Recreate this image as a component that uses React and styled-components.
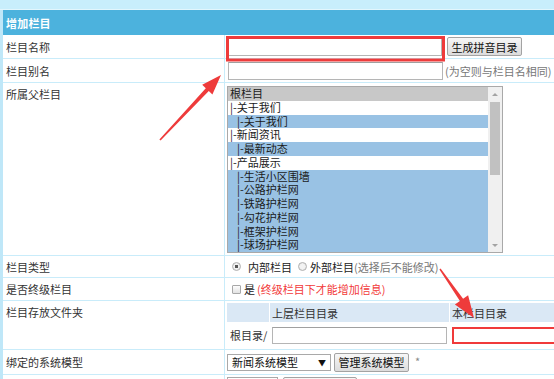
import React from 'react';
import styled, { createGlobalStyle } from 'styled-components';

const Global = createGlobalStyle`
  html, body { margin: 0; padding: 0; background: #fff; overflow: hidden; }
  body {
    font-family: "Noto Sans CJK SC", "Noto Sans", sans-serif;
    font-size: 11px;
    color: #333;
  }
  * { box-sizing: border-box; }
`;

const Page = styled.div`
  position: relative;
  width: 554px;
  height: 379px;
  overflow: hidden;
`;

const TopBand = styled.div`
  height: 10px;
  background: #c8eefc;
  border-bottom: 1px solid #e2f6fd;
`;

const Form = styled.div`
  border-left: 3px solid #bfe7f8;
`;

const Header = styled.div`
  height: 25px;
  background: #4cb2dd;
  color: #fff;
  font-weight: bold;
  padding-left: 3px;
  display: flex;
  align-items: center;
  letter-spacing: 0.2px;
`;

const Row = styled.div`
  display: grid;
  grid-template-columns: 222px 1fr;
  height: ${(p) => p.h}px;
  border-bottom: 1px solid #c9ecfa;
`;

const Label = styled.div`
  border-right: 1px solid #c9ecfa;
  padding-left: 3px;
  display: flex;
  align-items: ${(p) => (p.top ? 'flex-start' : 'center')};
  padding-top: ${(p) => (p.top ? '3px' : '0')};
  line-height: 16px;
  color: #333;
  white-space: nowrap;
`;

const Field = styled.div`
  display: flex;
  align-items: ${(p) => (p.top ? 'flex-start' : 'center')};
  padding-left: ${(p) => p.pl ?? 3}px;
  padding-top: ${(p) => p.pt ?? 0}px;
  white-space: nowrap;
  min-width: 0;
`;

const TextInput = styled.div`
  width: ${(p) => p.w}px;
  height: ${(p) => p.hh ?? 18}px;
  margin-left: ${(p) => p.ml ?? 0}px;
  flex-shrink: 0;
  background: #fff;
  border: ${(p) => (p.red ? '2px solid #f03a3a' : '1px solid #b5b5b5')};
  border-top-color: ${(p) => (p.red ? '#f03a3a' : '#a0a0a0')};
`;

const Button = styled.div`
  width: ${(p) => p.w}px;
  height: 19px;
  margin-left: ${(p) => p.ml ?? 0}px;
  flex-shrink: 0;
  display: flex;
  align-items: center;
  justify-content: center;
  border: 1px solid #a3a3a3;
  border-radius: 2px;
  background: linear-gradient(#f7f7f7, #dcdcdc);
  color: #111;
  font-size: 11px;
`;

const Hint = styled.span`
  color: ${(p) => (p.red ? '#f23a3a' : '#777')};
  margin-left: ${(p) => p.ml ?? 0}px;
`;

const Text = styled.span`
  color: #222;
  margin-left: ${(p) => p.ml ?? 0}px;
`;

const ListBox = styled.div`
  width: 276px;
  height: 167px;
  border: 1px solid #a9a9a9;
  display: flex;
  background: #fff;
`;

const Options = styled.div`
  flex: 1;
  min-width: 0;
`;

const Option = styled.div`
  height: 13.75px;
  line-height: 13.75px;
  padding-left: ${(p) => 2 + p.level * 7}px;
  color: #1a1a1a;
  background: ${(p) =>
    p.kind === 'grey' ? '#c8c8c8' : p.kind === 'blue' ? '#99c2e4' : '#fff'};
  white-space: nowrap;
`;

const Scrollbar = styled.div`
  width: 14px;
  background: #f0f0f0;
  display: flex;
  flex-direction: column;
  align-items: center;
`;

const ScrollArrow = styled.div`
  height: 14px;
  width: 100%;
  display: flex;
  align-items: center;
  justify-content: center;
  &::before {
    content: '';
    border-left: 3px solid transparent;
    border-right: 3px solid transparent;
    ${(p) => (p.down ? 'border-top: 3px solid #a3a3a3;' : 'border-bottom: 3px solid #a3a3a3;')}
  }
`;

const Thumb = styled.div`
  width: 10px;
  height: 73px;
  margin-top: 1px;
  background: #c1c1c1;
`;

const Spacer = styled.div`
  flex: 1;
`;

const Radio = styled.span`
  width: 9px;
  height: 9px;
  border-radius: 50%;
  border: 1px solid #b0b0b0;
  background: radial-gradient(circle, ${(p) => (p.checked ? '#555 0 1.8px, ' : '')}#f3f3f3 2px, #dedede 100%);
  margin-left: ${(p) => p.ml ?? 0}px;
  flex-shrink: 0;
`;

const Check = styled.span`
  width: 9px;
  height: 9px;
  border: 1px solid #a8a8a8;
  border-radius: 1px;
  background: linear-gradient(#fdfdfd, #e2e2e2);
  margin-left: ${(p) => p.ml ?? 0}px;
  flex-shrink: 0;
`;

const DirTable = styled.div`
  display: flex;
  flex-direction: column;
  width: 100%;
`;

const DirRow = styled.div`
  display: grid;
  grid-template-columns: 42px 179px 1fr;
  column-gap: 1px;
  height: ${(p) => p.h}px;
  margin-top: ${(p) => p.mt ?? 0}px;
`;

const DirHead = styled.div`
  background: #dae8f5;
  padding-left: 2px;
  display: flex;
  align-items: center;
  color: #333;
`;

const DirCell = styled.div`
  display: flex;
  align-items: center;
  padding-left: ${(p) => p.pl ?? 0}px;
  color: #333;
`;

const Select = styled.div`
  width: ${(p) => p.w}px;
  height: 17px;
  flex-shrink: 0;
  border: 1px solid #a9a9a9;
  background: #fff;
  display: flex;
  align-items: center;
  justify-content: space-between;
  padding: 0 4px 0 4px;
  color: #111;
`;

const Caret = styled.span`
  font-size: 8px;
  color: #111;
`;

const Star = styled.span`
  color: #888;
  margin-left: 6px;
  align-self: flex-start;
  margin-top: 3px;
`;

const Overlay = styled.svg`
  position: absolute;
  left: 0;
  top: 0;
  pointer-events: none;
`;

const options = [
  { t: '根栏目', level: 0, kind: 'grey' },
  { t: '|-关于我们', level: 0, kind: 'white' },
  { t: '|-关于我们', level: 1, kind: 'blue' },
  { t: '|-新闻资讯', level: 0, kind: 'white' },
  { t: '|-最新动态', level: 1, kind: 'blue' },
  { t: '|-产品展示', level: 0, kind: 'white' },
  { t: '|-生活小区围墙', level: 1, kind: 'blue' },
  { t: '|-公路护栏网', level: 1, kind: 'blue' },
  { t: '|-铁路护栏网', level: 1, kind: 'blue' },
  { t: '|-勾花护栏网', level: 1, kind: 'blue' },
  { t: '|-框架护栏网', level: 1, kind: 'blue' },
  { t: '|-球场护栏网', level: 1, kind: 'blue' },
];

const RED = '#ee3b3b';

export default function App() {
  return (
    <Page>
      <Global />
      <TopBand />
      <Form>
        <Header>增加栏目</Header>

        <Row h={24}>
          <Label>栏目名称</Label>
          <Field>
            <TextInput w={214} hh={18} ml={0} />
            <Button w={75} ml={5}>生成拼音目录</Button>
          </Field>
        </Row>

        <Row h={24}>
          <Label>栏目别名</Label>
          <Field>
            <TextInput w={215} hh={18} />
            <Hint ml={2}>(为空则与栏目名相同)</Hint>
          </Field>
        </Row>

        <Row h={173}>
          <Label top>所属父栏目</Label>
          <Field top pl={2} pt={3}>
            <ListBox>
              <Options>
                {options.map((o, i) => (
                  <Option key={i} level={o.level} kind={o.kind}>{o.t}</Option>
                ))}
              </Options>
              <Scrollbar>
                <ScrollArrow />
                <Thumb />
                <Spacer />
                <ScrollArrow down />
              </Scrollbar>
            </ListBox>
          </Field>
        </Row>

        <Row h={22}>
          <Label>栏目类型</Label>
          <Field pl={7}>
            <Radio checked />
            <Text ml={7}>内部栏目</Text>
            <Radio ml={6} />
            <Text ml={3}>外部栏目</Text>
            <Hint>(选择后不能修改)</Hint>
          </Field>
        </Row>

        <Row h={23}>
          <Label>是否终级栏目</Label>
          <Field pl={7}>
            <Check />
            <Text ml={3}>是</Text>
            <Hint red ml={2}>(终级栏目下才能增加信息)</Hint>
          </Field>
        </Row>

        <Row h={49}>
          <Label top>栏目存放文件夹</Label>
          <Field top pl={2} pt={2}>
            <DirTable>
              <DirRow h={19}>
                <DirHead />
                <DirHead>上层栏目目录</DirHead>
                <DirHead>本栏目目录</DirHead>
              </DirRow>
              <DirRow h={18} mt={4}>
                <DirCell pl={3}>根目录/</DirCell>
                <DirCell pl={2}>
                  <TextInput w={175} hh={17} />
                </DirCell>
                <DirCell pl={2}>
                  <TextInput w={120} hh={17} red />
                </DirCell>
              </DirRow>
            </DirTable>
          </Field>
        </Row>

        <Row h={25}>
          <Label>绑定的系统模型</Label>
          <Field pl={2}>
            <Select w={104}>
              <span>新闻系统模型</span>
              <Caret>▼</Caret>
            </Select>
            <Button w={75} ml={3}>管理系统模型</Button>
            <Star>*</Star>
          </Field>
        </Row>

        <Row h={30}>
          <Label />
          <Field top pl={2} pt={2}>
            <Select w={51} />
            <Button w={74} ml={5} />
          </Field>
        </Row>
      </Form>

      <Overlay width="554" height="379" viewBox="0 0 554 379">
        <rect x="227.5" y="37.5" width="216" height="22.5" fill="none" stroke={RED} strokeWidth="3" />
        <polygon
          fill={RED}
          points="159.4,139.5 205.8,88.2 202.2,84.8 221,75 212.4,94.4 208.8,91.0 160.6,140.5"
        />
        <polygon
          fill={RED}
          points="439.4,269.4 459.9,301.0 454.9,304.5 474,318 468.1,295.3 463.1,298.8 440.6,268.6"
        />
      </Overlay>
    </Page>
  );
}
